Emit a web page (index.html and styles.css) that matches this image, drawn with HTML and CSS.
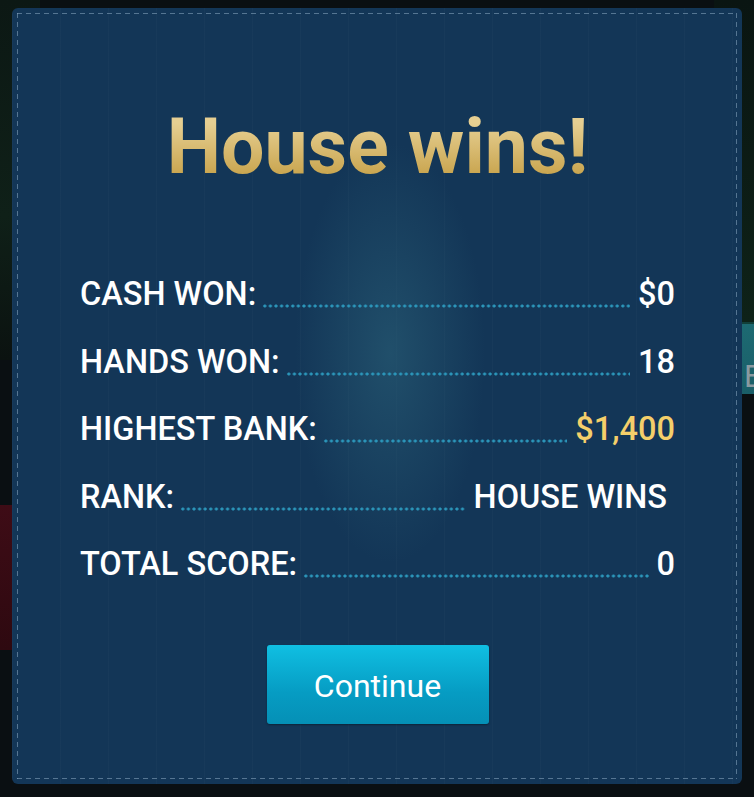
FILE: index.html
```html
<!DOCTYPE html>
<html>
<head>
<meta charset="utf-8">
<link rel="stylesheet" href="styles.css">
</head>
<body>
<div class="scene">
  <div class="bg-tab"><span>E</span></div>
  <div class="bg-red"></div>
  <div class="bg-green-l"></div>
  <div class="bg-green-r"></div>
</div>
<div class="panel">
  <h1 class="title">House wins!</h1>
  <div class="stats">
    <div class="row"><span class="label">CASH WON:</span><span class="dots"></span><span class="value">$0</span></div>
    <div class="row"><span class="label">HANDS WON:</span><span class="dots"></span><span class="value">18</span></div>
    <div class="row"><span class="label">HIGHEST BANK:</span><span class="dots"></span><span class="value gold">$1,400</span></div>
    <div class="row"><span class="label">RANK:</span><span class="dots"></span><span class="value rank">HOUSE WINS</span></div>
    <div class="row"><span class="label">TOTAL SCORE:</span><span class="dots"></span><span class="value">0</span></div>
  </div>
  <div class="actions">
    <button class="btn">Continue</button>
  </div>
</div>
</body>
</html>
```

FILE: styles.css
```css
html, body {
  margin: 0;
  padding: 0;
}
body {
  width: 754px;
  height: 797px;
  overflow: hidden;
  background: #0a0f12;
  font-family: Roboto, "Liberation Sans", sans-serif;
  position: relative;
}
.scene {
  position: absolute;
  inset: 0;
}
.bg-tab {
  position: absolute;
  left: 690px;
  top: 322px;
  width: 70px;
  height: 70px;
  background: linear-gradient(180deg, #1d6a72 0%, #1a5e68 100%);
  border-top: 2px solid #12403a;
}
.bg-tab span {
  position: absolute;
  left: 54px;
  top: 37px;
  font-size: 31px;
  color: #8a9aa0;
  line-height: 1;
}
.bg-red {
  position: absolute;
  left: -20px;
  top: 505px;
  width: 60px;
  height: 145px;
  background: linear-gradient(180deg, #3e0c16 0%, #2e0910 100%);
  border-radius: 20px;
}
.bg-green-l {
  position: absolute;
  left: 0;
  top: 0;
  width: 40px;
  height: 360px;
  background: linear-gradient(180deg, #0c1814 0%, #0f2018 60%, #0b1210 100%);
}
.bg-green-r {
  position: absolute;
  right: 0;
  top: 0;
  width: 40px;
  height: 322px;
  background: linear-gradient(180deg, #0a1512 0%, #0e2218 100%);
}
.panel {
  position: relative;
  margin: 8px 0 0 12px;
  width: 730px;
  height: 776px;
  box-sizing: border-box;
  border-radius: 6px;
  background:
    radial-gradient(ellipse 95px 210px at 378px 345px, rgba(46, 104, 126, 0.5), rgba(46, 104, 126, 0) 100%),
    repeating-linear-gradient(90deg, rgba(255,255,255,0.02) 0 1px, transparent 1px 48px),
    #133657;
  display: flex;
  flex-direction: column;
  align-items: stretch;
  padding: 99px 67px 0 68px;
}
.panel::before {
  content: "";
  position: absolute;
  inset: 5px;
  pointer-events: none;
  background:
    repeating-linear-gradient(90deg, rgba(140, 170, 195, 0.55) 0 5px, transparent 5px 9px) top left / 100% 1px no-repeat,
    repeating-linear-gradient(90deg, rgba(140, 170, 195, 0.55) 0 5px, transparent 5px 9px) bottom left / 100% 1px no-repeat,
    repeating-linear-gradient(180deg, rgba(140, 170, 195, 0.55) 0 5px, transparent 5px 9px) top left / 1px 100% no-repeat,
    repeating-linear-gradient(180deg, rgba(140, 170, 195, 0.55) 0 5px, transparent 5px 9px) top right / 1px 100% no-repeat;
}
.title {
  margin: 0;
  text-align: center;
  font-size: 77px;
  line-height: 80px;
  font-weight: 700;
  background: linear-gradient(180deg, #e6cf92 20%, #c9a54f 85%);
  -webkit-background-clip: text;
  background-clip: text;
  color: transparent;
}
.stats {
  margin-top: 74px;
  display: flex;
  flex-direction: column;
}
.row {
  display: flex;
  align-items: baseline;
  height: 67.5px;
  line-height: 67.5px;
  font-size: 32.5px;
  font-weight: 500;
  color: #ffffff;
}
.label {
  white-space: nowrap;
}
.dots {
  flex: 1;
  height: 4px;
  margin: 0 8px 0 6px;
  align-self: baseline;
  background-image: radial-gradient(circle, #2b96ba 1.3px, rgba(43,150,186,0) 1.8px);
  background-size: 5.6px 4px;
  background-repeat: repeat-x;
  position: relative;
  top: 3px;
}
.value {
  white-space: nowrap;
}
.value.gold {
  color: #f4cf6a;
}
.value.rank {
  margin-right: 8px;
}
.actions {
  display: flex;
  justify-content: center;
  margin-top: 46px;
}
.btn {
  width: 222px;
  height: 79px;
  border: none;
  border-radius: 3px;
  background: linear-gradient(180deg, #10bfe2 0%, #069cc3 60%, #0590b6 100%);
  box-shadow: 0 1px 2px rgba(0,0,0,0.35);
  color: #ffffff;
  font-family: Roboto, "Liberation Sans", sans-serif;
  font-size: 32px;
  font-weight: 400;
  padding: 4px 0 0;
  cursor: pointer;
}
```
